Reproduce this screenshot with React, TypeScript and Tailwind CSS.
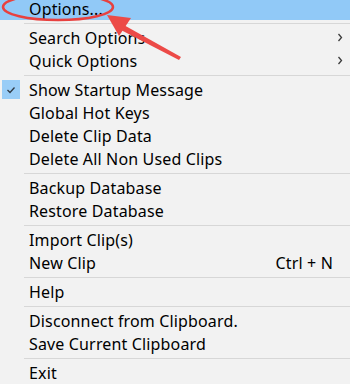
import React from "react";

type Item =
  | { kind: "sep" }
  | {
      kind: "item";
      label: string;
      sub?: boolean;
      checked?: boolean;
      shortcut?: string;
      active?: boolean;
    };

const ITEMS: Item[] = [
  { kind: "item", label: "Options...", active: true },
  { kind: "sep" },
  { kind: "item", label: "Search Options", sub: true },
  { kind: "item", label: "Quick Options", sub: true },
  { kind: "sep" },
  { kind: "item", label: "Show Startup Message", checked: true },
  { kind: "item", label: "Global Hot Keys" },
  { kind: "item", label: "Delete Clip Data" },
  { kind: "item", label: "Delete All Non Used Clips" },
  { kind: "sep" },
  { kind: "item", label: "Backup Database" },
  { kind: "item", label: "Restore Database" },
  { kind: "sep" },
  { kind: "item", label: "Import Clip(s)" },
  { kind: "item", label: "New Clip", shortcut: "Ctrl + N" },
  { kind: "sep" },
  { kind: "item", label: "Help" },
  { kind: "sep" },
  { kind: "item", label: "Disconnect from Clipboard." },
  { kind: "item", label: "Save Current Clipboard" },
  { kind: "sep" },
  { kind: "item", label: "Exit" },
];

function Chevron() {
  return (
    <svg width="6" height="9" viewBox="0 0 6 9" className="block">
      <path d="M1.5 1 L4.5 4.5 L1.5 8" fill="none" stroke="#3c3c3c" strokeWidth="1.3" />
    </svg>
  );
}

function Check() {
  return (
    <svg width="10" height="8" viewBox="0 0 10 8" className="block">
      <path d="M1.5 4 L4 6.5 L8.5 1.5" fill="none" stroke="#2f3a45" strokeWidth="1.3" />
    </svg>
  );
}

export default function App() {
  return (
    <div
      className="relative w-[350px] h-[384px] overflow-hidden bg-[#f2f2f2] text-black"
      style={{ fontFamily: '"Noto Sans", "Liberation Sans", sans-serif' }}
    >
      <div className="flex flex-col">
        {ITEMS.map((it, i) =>
          it.kind === "sep" ? (
            <div key={i} className="h-[6px] flex items-center pl-[24px]">
              <div className="h-px w-full bg-[#d7d7d7]" />
            </div>
          ) : (
            <div
              key={i}
              className={`flex items-center pr-[7px] text-[16px] leading-none tracking-[0.15px] ${
                it.active ? "h-[20px] bg-[#91c9f7] pb-[2px]" : "h-[23px]"
              }`}
            >
              <div className="w-[29px] h-full flex items-center pl-[2px] shrink-0">
                {it.checked ? (
                  <div className="w-[18px] h-[19px] bg-[#99cdf7] flex items-center justify-center">
                    <Check />
                  </div>
                ) : null}
              </div>
              <span className="flex-1 whitespace-nowrap">{it.label}</span>
              {it.shortcut ? <span className="mr-[10px] whitespace-nowrap">{it.shortcut}</span> : null}
              {it.sub ? <Chevron /> : null}
            </div>
          )
        )}
      </div>

      {/* red annotation over the first entry */}
      <svg
        width="350"
        height="384"
        viewBox="0 0 350 384"
        className="absolute inset-0 pointer-events-none"
      >
        <ellipse cx="58" cy="7" rx="55" ry="13" fill="none" stroke="#e8413f" strokeWidth="2.5" />
        <path d="M107 15 L131 18 L119 36 Z" fill="#ec4a47" />
        <path d="M122 24 L181 57 L179 60 L119 29 Z" fill="#ec4a47" />
      </svg>
    </div>
  );
}
